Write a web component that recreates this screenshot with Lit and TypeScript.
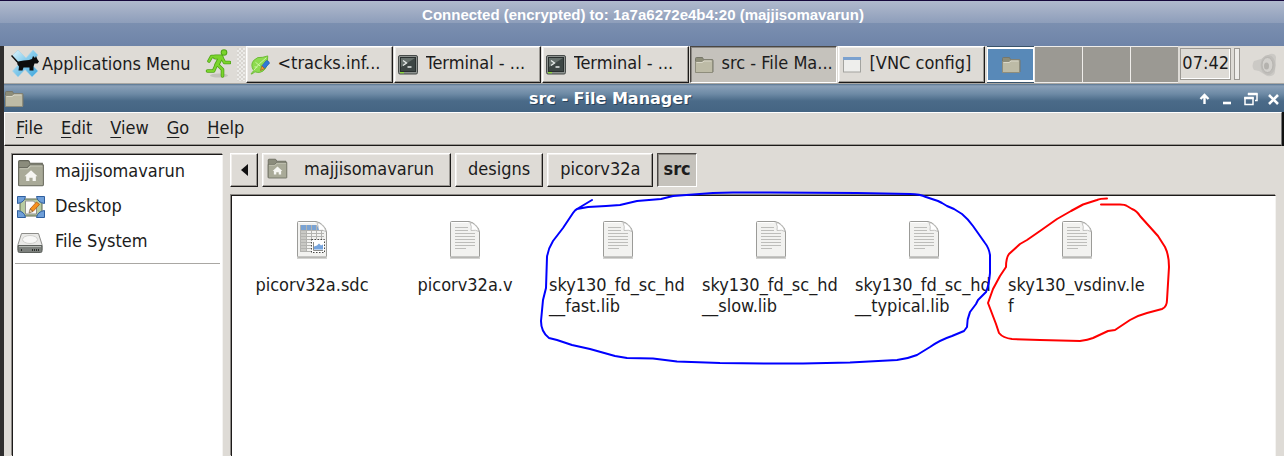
import { LitElement, html, css, svg } from "lit";
import { customElement, state } from "lit/decorators.js";
import { classMap } from "lit/directives/class-map.js";

const folder = (size: number) => html`
  <svg width=${size} height=${size} viewBox="0 0 20 20" aria-hidden="true">
    <path d="M1.5 17V3.5q0-1 1-1h6l1 2h8.500q1 0 1 1V17z" fill="#8d8d78" stroke="#77776a" />
    <path d="M1.500 6.500H8l1.500-1.500H18.500V17.500H1.500z" fill="#bdbba6" stroke="#8e8d7c" />
    <path d="M2.500 7.500H8.500l1.500-1.500H17.500" fill="none" stroke="#dad8c8" />
  </svg>`;

const homeFolder = (size: number) => html`
  <svg width=${size} height=${size} viewBox="0 0 26 26" aria-hidden="true">
    <path d="M1.500 24V2.500q0-1 1-1H10q1 0 1.500 1l.5 1.500H23.500V24z" fill="#8b8c7c" stroke="#65665a" />
    <path d="M1.500 8h8l2.500-2.500H24.500V24q0 .8-.8.8H2.300q-.8 0-.8-.8z" fill="#a9aa98" stroke="#6b6c60" />
    <path d="M2.500 9h7.500l2.500-2.500H23.500" fill="none" stroke="#c7c8b8" />
    <path d="M13 10.500l6 5.500h-1.500v4.500h-3V17.500h-3v3h-3V16H7z" fill="#f6f6f2" />
  </svg>`;

const mouse = html`
  <svg width="29" height="29" viewBox="0 0 29 29" aria-hidden="true">
    <defs>
      <linearGradient id="mx" x1="0" y1="0" x2="1" y2="1">
        <stop offset="0" stop-color="#e2f5fc" />
        <stop offset=".4" stop-color="#8fd0ee" />
        <stop offset="1" stop-color="#3fa6dc" />
      </linearGradient>
    </defs>
    <path d="M1 7L7 1l8 8 7-8 5 5-7 8.500 7 7.500-6 6-7-7.500-7 7.500L1.500 22l7-7.500z" fill="url(#mx)" stroke="#a8d4e8" stroke-width=".6" />
    <path d="M4 11l3 1.500q6-1.500 11-1.500l3-1 1-3 2 2 1-2 1.500 3.500 1.500 2-1.500 2h-3l-1 3v4h-4v-3h-6l-1 3H7.500l.5-4-1.500-2-.5-2.500z" fill="#0c0c0c" />
    <path d="M.5 6.500l6 6.500" stroke="#111" stroke-width="1.500" />
  </svg>`;

const runner = html`
  <svg width="26" height="30" viewBox="0 0 26 30" aria-hidden="true">
    <ellipse cx="14" cy="26.500" rx="9" ry="2" fill="#c4c2bc" />
    <g fill="none" stroke="#4fa416" stroke-linejoin="round" stroke-linecap="round">
      <path d="M10.500 8h5.500l-4 7.500" stroke-width="5" />
      <path d="M9.500 7.500h-3L4 12M16.500 8l3 5.500h5M11.500 15.500L8.500 22H2.500M12.500 15.500l5 5v6.500" stroke-width="3.600" />
    </g>
    <circle cx="19" cy="3.500" r="3.300" fill="#4fa416" />
    <g fill="none" stroke="#7bd42c" stroke-linejoin="round" stroke-linecap="round">
      <path d="M10.500 8h5.500l-4 7.500" stroke-width="3.400" />
      <path d="M9.500 7.500h-3L4 12M16.500 8l3 5.500h5M11.500 15.500L8.500 22H2.500M12.500 15.500l5 5v6.500" stroke-width="2" />
    </g>
    <circle cx="19" cy="3.500" r="2.300" fill="#7bd42c" />
  </svg>`;

const leaf = html`
  <svg width="20" height="20" viewBox="0 0 22 22" aria-hidden="true">
    <path d="M1 20.500q2-1 3-3.500Q0 11 4 6q4-4.500 10-3.500l5.500-1.500q.5 9-2.500 14-5 6-11.500 3.500L2 21z" fill="#8ddb4f" stroke="#69b832" />
    <path d="M4 17Q10 9 18 3M6 8l5 4M5 13l3 .500" fill="none" stroke="#d2f5ac" />
    <path d="M13 12l5-6q3 .2 3.500 3l-5.500 6z" fill="#2f78d8" stroke="#1f58ac" stroke-width=".7" />
    <path d="M13 12l3 3-4.500 2z" fill="#e89a3c" stroke="#9c5a1c" stroke-width=".7" />
  </svg>`;

const terminal = html`
  <svg width="20" height="20" viewBox="0 0 20 20" aria-hidden="true">
    <rect x=".5" y=".5" width="19" height="18.500" rx="1.500" fill="#8c918e" stroke="#474b49" />
    <rect x="2.500" y="2.500" width="15" height="14" fill="#3d4644" stroke="#2a302f" />
    <path d="M3 3h14L3 12z" fill="#66706c" />
    <path d="M5 5.500l3.500 2.500L5 10.500M9.500 12h4" fill="none" stroke="#e8ecea" stroke-width="1.300" />
    <path d="M2 17.700h4" stroke="#8ce234" stroke-width="1.200" />
  </svg>`;

const plainWindow = html`
  <svg width="20" height="18" viewBox="0 0 20 18" aria-hidden="true">
    <rect x="1.500" y="1.500" width="17" height="14.500" fill="#eeeeec" stroke="#a3a39f" />
    <path d="M1 1h18v3H1z" fill="#7ba1cf" />
  </svg>`;

const speaker = html`
  <svg width="28" height="28" viewBox="0 0 28 28" aria-hidden="true">
    <path d="M4 10q-3 5 0 9l5 1 8 5q7 1 8-4l1-15q-1-4-6-3l-9 5z" fill="#cbc9c5" />
    <ellipse cx="18" cy="14" rx="7.500" ry="10" fill="#c0beba" />
    <ellipse cx="17.500" cy="14" rx="5.500" ry="7.500" fill="#d3d1cd" stroke="#b5b3af" />
    <ellipse cx="16.500" cy="15" rx="2.500" ry="3.500" fill="#b4b2ae" />
  </svg>`;

const desktop = html`
  <svg width="28" height="24" viewBox="0 0 28 24" aria-hidden="true">
    <rect x="3" y="3" width="22" height="17" fill="#b7cba0" stroke="#5c6650" />
    <path d="M.500.500h8q-1 6-8 7zM27.500.500h-8q1 6 8 7zM.500 21.500h8q-1-6-8-7zM27.500 21.500h-8q1-6 8-7z" fill="#6f9fd8" stroke="#2f5f9f" />
    <path d="M8.500 5h8l3 3v10h-11z" fill="#fafaf8" stroke="#8f8f8a" />
    <path d="M13 13l6.500-7 3 2.500-6.500 7z" fill="#f5921d" stroke="#b5560b" stroke-width=".8" />
    <path d="M13 13l3 2.500-4 1.500z" fill="#eacb9a" stroke="#69553a" stroke-width=".6" />
  </svg>`;

const drive = html`
  <svg width="26" height="22" viewBox="0 0 26 22" aria-hidden="true">
    <path d="M4.500 1.500h17l3.500 11V18H1v-5.500z" fill="#e9e9e7" stroke="#8c8c89" />
    <ellipse cx="13" cy="7.500" rx="7.500" ry="4" fill="#f7f7f6" stroke="#d0d0cd" />
    <path d="M1 13.500h24V19q0 1.500-1.500 1.500h-21Q1 20.500 1 19z" fill="#7d817d" stroke="#5c605c" />
    <path d="M2 14.500h22" stroke="#b5b9b4" />
    <path d="M15 18h7M4 18h2" stroke="#2d302d" stroke-width="2" stroke-dasharray="1 1" />
  </svg>`;

const pageShape = svg`
  <path d="M2 38h30" stroke="#d3d3d1" stroke-width="2" />
  <path d="M2.500 2.500q0-1 1-1H21q4.500 1 6.500 3.500 3.500 3 4 7V36q0 1-1 1H3.500q-1 0-1-1z" fill="#f2f2f0" stroke="#9b9b98" />
  <path d="M3.500 2.500H20" stroke="#fff" />
  <path d="M22 2.500q2 4 1 8 5-1 8 1-1-4-4-6.500-2-2-5-2.500z" fill="#fff" stroke="#b5b5b2" stroke-width=".8" />`;

const textFile = html`
  <svg width="34" height="40" viewBox="0 0 34 40" aria-hidden="true">
    ${pageShape}
    <path d="M7 7.500h13M7 10.500h13M7 13.500h20M7 16.500h20M7 19.500h20M7 22.500h20M7 25.500h20M7 28.500h11" stroke="#bdbdba" />
  </svg>`;

const sheetFile = html`
  <svg width="34" height="40" viewBox="0 0 34 40" aria-hidden="true">
    ${pageShape}
    <path d="M5 5h17l2 5H5z" fill="#7aa3d3" />
    <path d="M5 10h6v22H5z" fill="#c9c9c5" />
    <path d="M5 10.500h23M5 13.500h24M5 16.500h24M5 19.500h24M5 22.500h12M5 25.500h12M5 28.500h12M5 31.500h12M5.500 5v27M11.500 5v27M16.500 5v15M21.500 5v15M26.500 10v10" stroke="#b3b3b0" fill="none" />
    <rect x="16.500" y="19.500" width="13" height="13" fill="#fff" stroke="#4b4b49" stroke-dasharray="1.500 1.500" />
    <path d="M18.500 22v8.500H28" fill="none" stroke="#8b8b88" />
    <path d="M19 29.500v-3l3-1 2-2 2 2 2-1v5z" fill="#76a4dd" />
  </svg>`;

const fileNames: { name: string; sheet?: boolean }[] = [
  { name: "picorv32a.sdc", sheet: true },
  { name: "picorv32a.v" },
  { name: "sky130_fd_sc_hd__fast.lib" },
  { name: "sky130_fd_sc_hd__slow.lib" },
  { name: "sky130_fd_sc_hd__typical.lib" },
  { name: "sky130_vsdinv.lef" },
];

const controls = css`
  * {
    box-sizing: border-box;
  }
  button {
    margin: 0;
    padding: 0;
    border: 0;
    background: none;
    color: inherit;
    font: inherit;
    white-space: nowrap;
    display: flex;
    align-items: center;
  }
  svg {
    display: block;
    flex: none;
  }
  .raised {
    background: #dedbd6;
    border: 1px solid;
    border-color: #fff #1c1a19 #1c1a19 #fff;
    box-shadow: inset -1px -1px #9b9893, inset 1px 1px #f0eeeb;
  }
  .sunken {
    background: #c5c2bc;
    border: 1px solid;
    border-color: #4a4744 #fff #fff #4a4744;
    box-shadow: inset 1px 1px #8b8883;
  }
`;

@customElement("task-panel")
class TaskPanel extends LitElement {
  static styles = [
    controls,
    css`
      :host {
        box-sizing: border-box;
        flex: none;
        display: flex;
        align-items: stretch;
        height: 38px;
        background: #dedbd6;
        border-bottom: 1px solid #a9a7a3;
      }
      .menu {
        padding: 0 14px 3px 7px;
        gap: 2px;
      }
      .logout {
        padding-bottom: 2px;
      }
      .grip {
        width: 8px;
        margin: 2px 1px 2px 6px;
        background: repeating-conic-gradient(#ecebe8 0 25%, #d8d5d0 0 50%) 0 0 / 4px 4px;
      }
      .tasks {
        flex: 1;
        min-width: 0;
        display: flex;
        gap: 1px;
      }
      .task {
        flex: 0 1 147px;
        min-width: 0;
        padding: 0 3px;
        gap: 8px;
      }
      .task span {
        overflow: hidden;
        padding-bottom: 4px;
      }
      .pager {
        display: flex;
        gap: 1px;
        padding: 1px 0;
        background: #efedea;
      }
      .space {
        width: 47px;
        justify-content: center;
        background: #9b9993;
      }
      .space.current {
        background: #5889b8;
        border: solid #fff;
        border-width: 2px 1px;
        box-shadow: 0 -1px #39536b, 0 1px #39536b;
      }
      .clock {
        margin: 2px 3px 3px 2px;
        padding: 0 1px 4px;
        border: 1px solid #9b9893;
        box-shadow: inset -1px -1px #fff;
        display: flex;
        align-items: center;
      }
      .handle {
        width: 6px;
        margin: 2px 10px 3px 0;
        border: 1px solid #9b9893;
        background: #efedea;
      }
      .volume {
        padding: 0 6px 0 0;
      }
    `,
  ];

  render() {
    const tasks = [
      { icon: leaf, label: "<tracks.inf..." },
      { icon: terminal, label: "Terminal - ..." },
      { icon: terminal, label: "Terminal - ..." },
      { icon: folder(20), label: "src - File Ma...", active: true },
      { icon: plainWindow, label: "[VNC config]" },
    ];
    return html`
      <button class="menu">${mouse}<span>Applications Menu</span></button>
      <button class="logout" aria-label="Log out">${runner}</button>
      <div class="grip"></div>
      <div class="tasks">
        ${tasks.map(
          (t) => html`<button class=${classMap({ task: true, raised: !t.active, sunken: !!t.active })}>
            ${t.icon}<span>${t.label}</span>
          </button>`
        )}
      </div>
      <div class="pager">
        ${[1, 2, 3, 4].map(
          (n) => html`<button class=${classMap({ space: true, current: n === 1 })} aria-label="Workspace ${n}">
            ${n === 1 ? folder(20) : ""}
          </button>`
        )}
      </div>
      <time class="clock">07:42</time>
      <div class="handle"></div>
      <button class="volume" aria-label="Volume">${speaker}</button>
    `;
  }
}

@customElement("file-manager")
class FileManager extends LitElement {
  @state() private files = fileNames;

  static styles = [
    controls,
    css`
      :host {
        flex: 1;
        min-height: 0;
        display: flex;
        flex-direction: column;
        background: #dedbd6;
      }
      .title {
        flex: none;
        height: 28px;
        display: flex;
        align-items: center;
        padding: 2px 2px 0 0;
        background: linear-gradient(#587590 0, #8aa0b8 2px, #6d8aa5 10px, #4a6a88 17px, #456583);
        color: #fff;
      }
      h1 {
        flex: 1;
        margin: 0;
        text-align: center;
        font: bold 16px/20px "DejaVu Sans", sans-serif;
        text-shadow: 1px 1px #2b435a;
      }
      .tools {
        display: flex;
        gap: 6px;
      }
      .menubar {
        flex: none;
        display: flex;
        gap: 18px;
        height: 34px;
        margin-right: 2px;
        padding: 0 11px 4px;
        border: 1px solid;
        border-color: #fff #777 #1c1a19 #fff;
        box-shadow: inset 0 -1px #9b9893, 2px 0 #111;
      }
      u {
        text-underline-offset: 3px;
        text-decoration-thickness: 1px;
      }
      .body {
        flex: 1;
        min-height: 0;
        display: flex;
        gap: 7px;
        padding: 7px 8px 0;
      }
      .places {
        flex: none;
        width: 211px;
        margin-top: 1px;
        background: #fff;
        border: 1px solid;
        border-width: 1px 1px 0;
        border-color: #1c1a19 #f4f3f1 #fff #1c1a19;
        box-shadow: -1px -1px #8e8b87;
      }
      .place {
        width: 100%;
        height: 35px;
        padding-left: 4px;
      }
      .place span {
        padding-bottom: 4px;
      }
      .place .pic {
        width: 38px;
        padding: 0;
      }
      .rule {
        margin: 3px 2px 0;
        border-top: 1px solid #a9a7a3;
      }
      .main {
        flex: 1;
        min-width: 0;
        display: flex;
        flex-direction: column;
        gap: 8px;
      }
      .path {
        display: flex;
        gap: 4px;
        height: 34px;
      }
      .path button {
        padding: 0 12px 4px;
      }
      .path .back {
        width: 28px;
        padding: 0 0 0 9px;
      }
      .path .home {
        gap: 16px;
        padding: 0 16px 4px 4px;
      }
      .path .here {
        padding: 0 5px 4px;
        font-weight: bold;
      }
      .files {
        flex: 1;
        margin-left: 1px;
        display: grid;
        grid-template-columns: repeat(auto-fill, 138px);
        align-content: start;
        gap: 24px 15px;
        padding: 24px 11px;
        background: #fff;
        border: 1px solid;
        border-width: 1px 1px 0;
        border-color: #1c1a19 #f4f3f1 #fff #1c1a19;
        box-shadow: -1px -1px #8e8b87;
      }
      .file {
        flex-direction: column;
        gap: 14px;
        line-height: 21px;
        white-space: normal;
        word-break: break-all;
        text-align: left;
      }
    `,
  ];

  render() {
    return html`
      <header class="title">
        ${folder(20)}
        <h1>src - File Manager</h1>
        <div class="tools">
          <button aria-label="Roll up">
            <svg width="17" height="18" viewBox="0 0 17 18"><path d="M8.500 14V6M4.500 9l4-4 4 4" fill="none" stroke="#fff" stroke-width="2.400" /></svg>
          </button>
          <button aria-label="Minimize">
            <svg width="17" height="18" viewBox="0 0 17 18"><path d="M4 13h8" stroke="#fff" stroke-width="2.600" /></svg>
          </button>
          <button aria-label="Restore">
            <svg width="17" height="18" viewBox="0 0 17 18"><path d="M3 8h8v6.500H3zM6.500 5V4H15v6.500h-2" fill="none" stroke="#fff" stroke-width="1.500" /><path d="M2.200 8h9.500M6 4h9.500" stroke="#fff" stroke-width="2.400" /></svg>
          </button>
          <button aria-label="Close">
            <svg width="17" height="18" viewBox="0 0 17 18"><path d="M4 5l9 9M13 5l-9 9" stroke="#fff" stroke-width="2.600" /></svg>
          </button>
        </div>
      </header>
      <nav class="menubar">
        ${["File", "Edit", "View", "Go", "Help"].map((m) => html`<button><span><u>${m[0]}</u>${m.slice(1)}</span></button>`)}
      </nav>
      <div class="body">
        <aside class="places">
          <button class="place"><span class="pic">${homeFolder(28)}</span><span>majjisomavarun</span></button>
          <button class="place"><span class="pic">${desktop}</span><span>Desktop</span></button>
          <button class="place"><span class="pic">${drive}</span><span>File System</span></button>
          <div class="rule"></div>
        </aside>
        <section class="main">
          <nav class="path">
            <button class="back raised" aria-label="Back">
              <svg width="10" height="12" viewBox="0 0 10 12"><path d="M8 0v12L1 6z" fill="#111" /></svg>
            </button>
            <button class="home raised">${homeFolder(21)}majjisomavarun</button>
            <button class="raised">designs</button>
            <button class="raised">picorv32a</button>
            <button class="here sunken">src</button>
          </nav>
          <div class="files">
            ${this.files.map(
              (f) => html`<button class="file">${f.sheet ? sheetFile : textFile}<span>${f.name}</span></button>`
            )}
          </div>
        </section>
      </div>
    `;
  }
}

@customElement("app-root")
class AppRoot extends LitElement {
  static styles = css`
    :host {
      position: relative;
      display: flex;
      flex-direction: column;
      height: 100vh;
      overflow: hidden;
      color: #1c1c1c;
      font: 18px/21px "DejaVu Sans Condensed", "DejaVu Sans", sans-serif;
    }
    .status {
      box-sizing: border-box;
      flex: none;
      height: 46px;
      padding: 5px 0 0 2px;
      border-top: 1px solid #16083c;
      background: linear-gradient(#b0bacd, #8d9dba 50%, #7b8fb0 50%, #6e84a8);
      color: #fff;
      text-align: center;
      font: bold 15px/17px "Liberation Sans", Arial, sans-serif;
    }
    .screen {
      flex: 1;
      min-height: 0;
      display: flex;
      flex-direction: column;
      border-left: 4px solid #2f2e2e;
    }
    .marks {
      position: absolute;
      top: 0;
      left: 0;
      width: 1284px;
      height: 456px;
      pointer-events: none;
      fill: none;
      stroke-width: 2;
      stroke-linejoin: round;
      stroke-linecap: round;
    }
  `;

  render() {
    return html`
      <div class="status">Connected (encrypted) to: 1a7a6272e4b4:20 (majjisomavarun)</div>
      <div class="screen">
        <task-panel></task-panel>
        <file-manager></file-manager>
      </div>
      <svg class="marks" viewBox="0 0 1284 456" aria-hidden="true">
        <path
          stroke="#0000ff"
          d="M592 200L577 209L588 207L606 206L620 205L637 201L661 199L673 196L713 193L733 192.500L770 192.500L857 193L910 194Q920 194 926 197L938 201L942 203L947 206L954 209L962 214Q968 219 973 226L985 243Q989 248 990 255V273Q989 285 986 292L978 300L976 304L970 312Q967 319 967 327L964 331L952 336Q940 340 930 347L917 355Q907 359 897 360L850 362.500L803 363.500L770 363.500L720 363L677 361.500L653 358.500L627 358L615 356L590 349L572 345L557 340L549 338Q541 332 541 321L543 300L546 288L547 257Q548 249 553 241L563 228L573 213Q575 210 577 209"
        />
        <path
          stroke="#ff0000"
          d="M1107 198.500Q1100 198.500 1097 200L1083 204.500L1071 211L1057 219L1040 231L1027 240L1020 244L1009 254Q1006 258 1006 267L1000 276L993 289L988 303L996 324L999 333Q1003 338 1012 339L1040 340L1080 341Q1088 340 1093 338L1108 331L1115 330L1130 320Q1139 315 1147 313L1162 309Q1167 307 1167 300L1169 267Q1169 255 1165 247L1158 236L1140 216Q1137 211 1132 209L1127 206Q1125 204.500 1120 204.500H1101"
        />
      </svg>
    `;
  }
}
